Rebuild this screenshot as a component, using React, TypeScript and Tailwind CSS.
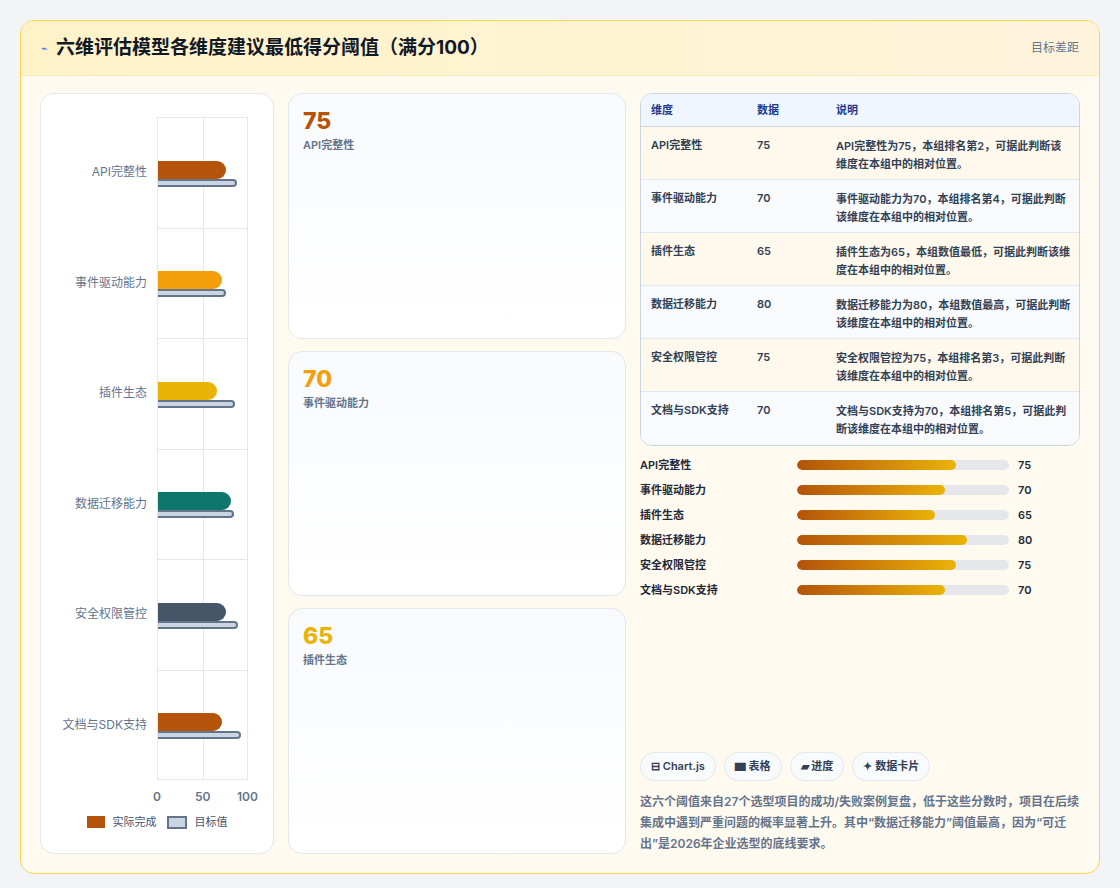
import React from "react";

const dims = [
  { n: "API完整性", v: 75, t: 87, c: "#b45309", d: "API完整性为75，本组排名第2，可据此判断该维度在本组中的相对位置。" },
  { n: "事件驱动能力", v: 70, t: 75, c: "#f59e0b", d: "事件驱动能力为70，本组排名第4，可据此判断该维度在本组中的相对位置。" },
  { n: "插件生态", v: 65, t: 85, c: "#eab308", d: "插件生态为65，本组数值最低，可据此判断该维度在本组中的相对位置。" },
  { n: "数据迁移能力", v: 80, t: 84, c: "#0f766e", d: "数据迁移能力为80，本组数值最高，可据此判断该维度在本组中的相对位置。" },
  { n: "安全权限管控", v: 75, t: 88, c: "#475569", d: "安全权限管控为75，本组排名第3，可据此判断该维度在本组中的相对位置。" },
  { n: "文档与SDK支持", v: 70, t: 91, c: "#b45309", d: "文档与SDK支持为70，本组排名第5，可据此判断该维度在本组中的相对位置。" },
];

export default function App() {
  return (
    <div className="w-[1120px] h-[888px] bg-[#f3f4f6] p-[20px] pb-[14px]" style={{ fontFamily: "Inter, 'Noto Sans CJK SC', sans-serif" }}>
      <div className="h-full rounded-[14px] border border-[#fcd34d] bg-[#fffaf0] flex flex-col overflow-hidden">
        <div className="h-[55px] shrink-0 flex items-center justify-between px-[20px] bg-gradient-to-r from-[#fef3c7] to-[#fff3dc] border-b border-[#fde9b8]">
          <div className="flex items-center gap-[8px]">
            <span className="text-[11px] text-[#4f6bd8]">⌁</span>
            <span className="text-[19px] font-bold text-[#111827]">六维评估模型各维度建议最低得分阈值（满分100）</span>
          </div>
          <span className="text-[12px] text-[#64748b]">目标差距</span>
        </div>
        <div className="flex-1 flex gap-[14px] px-[19px] pt-[17px] pb-[19px]">
          {/* chart */}
          <div className="w-[234px] rounded-[14px] bg-white border border-[#e5e7eb] flex flex-col pt-[23px]">
            <div className="flex">
              <div className="w-[116px]">
                {dims.map((d) => (
                  <div key={d.n} className="h-[110.5px] flex items-center justify-end pr-[10px] text-[12px] text-[#64748b]">{d.n}</div>
                ))}
              </div>
              <div className="w-[91px] border-l border-r border-[#e5e7eb] relative">
                <div className="absolute left-[45px] top-0 bottom-0 w-px bg-[#e5e7eb]" />
                {dims.map((d) => (
                  <div key={d.n} className="h-[110.5px] border-t border-[#e5e7eb] last:border-b relative flex flex-col justify-center">
                    <div className="h-[18px] rounded-r-[9px] mt-[2px]" style={{ width: `${d.v * 0.91}px`, background: d.c }} />
                    <div className="h-[8px] rounded-r-[4px] bg-[#cbd5e1] border-2 border-l-0 border-[#64748b]" style={{ width: `${d.t * 0.91}px` }} />
                  </div>
                ))}
              </div>
            </div>
            <div className="relative h-[22px] ml-[116px] mt-[8px] text-[12px] font-semibold text-[#64748b]">
              <span className="absolute left-[-4px]">0</span>
              <span className="absolute left-[38px]">50</span>
              <span className="absolute left-[80px]">100</span>
            </div>
            <div className="flex justify-center items-center gap-[8px] mt-[4px] text-[11px] text-[#475569]">
              <span className="w-[18px] h-[12px] bg-[#b45309]" />
              <span>实际完成</span>
              <span className="w-[20px] h-[13px] bg-[#cbd5e1] border-2 border-[#64748b] ml-[2px]" />
              <span>目标值</span>
            </div>
          </div>
          {/* cards */}
          <div className="w-[338px] flex flex-col gap-[12px]">
            {dims.slice(0, 3).map((d) => (
              <div key={d.n} className="flex-1 rounded-[14px] border border-[#e2e8f0] bg-gradient-to-b from-[#f8fafc] to-white px-[14px] pt-[12px]">
                <div className="text-[23px] font-extrabold leading-[30px]" style={{ color: d.c }}>{d.v}</div>
                <div className="text-[11px] font-semibold text-[#64748b] mt-[1px]">{d.n}</div>
              </div>
            ))}
          </div>
          {/* right */}
          <div className="flex-1 flex flex-col">
            <div className="rounded-[12px] border border-[#cbd5e1] overflow-hidden text-[11px] font-semibold text-[#334155]">
              <div className="flex h-[33px] items-center bg-[#eff6ff] text-[#1e3a8a] border-b border-[#cbd5e1]">
                <div className="w-[116px] pl-[10px]">维度</div>
                <div className="w-[79px]">数据</div>
                <div>说明</div>
              </div>
              {dims.map((d, i) => (
                <div key={d.n} className={`flex h-[53px] pt-[10px] border-b border-[#e2e8f0] last:border-b-0 ${i % 2 ? "bg-[#f8fafc]" : "bg-[#fef9ec]"}`}>
                  <div className="w-[116px] pl-[10px]">{d.n}</div>
                  <div className="w-[79px]">{d.v}</div>
                  <div className="flex-1 pr-[8px] leading-[18px]">{d.d}</div>
                </div>
              ))}
            </div>
            <div className="mt-[10px] flex flex-col gap-[7px]">
              {dims.map((d) => (
                <div key={d.n} className="flex items-center h-[18px] text-[11px] font-semibold text-[#1f2937]">
                  <div className="w-[157px]">{d.n}</div>
                  <div className="w-[212px] h-[10px] rounded-full bg-[#e5e7eb] overflow-hidden">
                    <div className="h-full rounded-full bg-gradient-to-r from-[#b45309] to-[#eab308]" style={{ width: `${d.v}%` }} />
                  </div>
                  <div className="ml-[9px]">{d.v}</div>
                </div>
              ))}
            </div>
            <div className="flex-1" />
            <div className="flex gap-[8px] text-[11px] font-semibold text-[#334155]">
              {["⊟ Chart.js", "▆ 表格", "▰ 进度", "✦ 数据卡片"].map((t) => (
                <span key={t} className="h-[29px] px-[10px] rounded-full border border-[#e2e8f0] bg-[#f8fafc] flex items-center">{t}</span>
              ))}
            </div>
            <p className="mt-[10px] text-[12px] font-semibold leading-[21px] text-[#64748b]">
              这六个阈值来自27个选型项目的成功/失败案例复盘，低于这些分数时，项目在后续集成中遇到严重问题的概率显著上升。其中“数据迁移能力”阈值最高，因为“可迁出”是2026年企业选型的底线要求。
            </p>
          </div>
        </div>
      </div>
    </div>
  );
}
